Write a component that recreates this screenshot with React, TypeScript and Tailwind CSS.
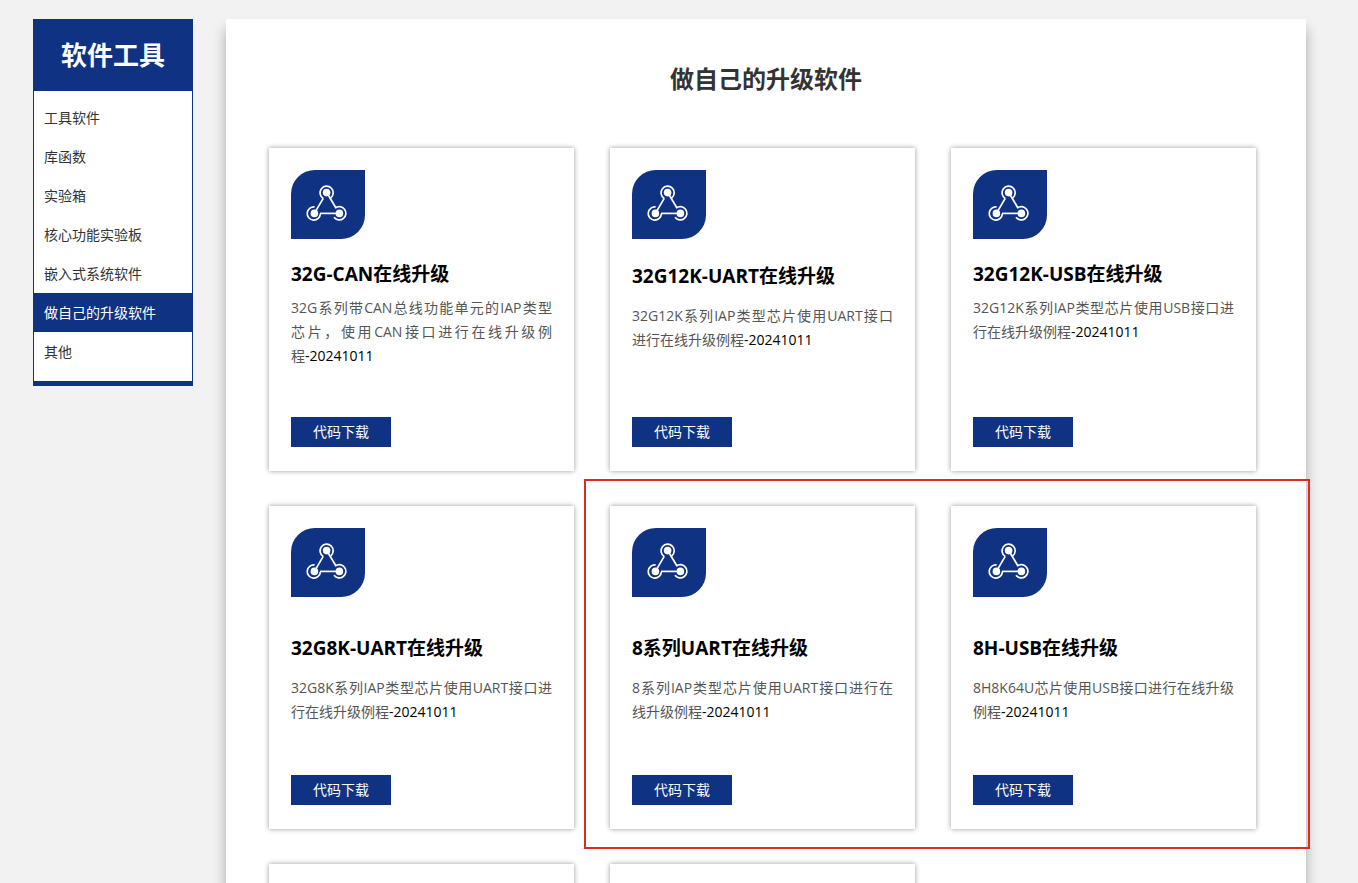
import clsx from "clsx";

const categories = [
  "工具软件",
  "库函数",
  "实验箱",
  "核心功能实验板",
  "嵌入式系统软件",
  "做自己的升级软件",
  "其他",
];

type Spacing = "compact" | "normal" | "roomy";

type Download = {
  title: string;
  lines: string[];
  date: string;
  spacing: Spacing;
};

const downloads: Download[] = [
  {
    title: "32G-CAN在线升级",
    lines: ["32G系列带CAN总线功能单元的IAP类型", "芯片，使用CAN接口进行在线升级例", "程"],
    date: "-20241011",
    spacing: "compact",
  },
  {
    title: "32G12K-UART在线升级",
    lines: ["32G12K系列IAP类型芯片使用UART接口", "进行在线升级例程"],
    date: "-20241011",
    spacing: "normal",
  },
  {
    title: "32G12K-USB在线升级",
    lines: ["32G12K系列IAP类型芯片使用USB接口进", "行在线升级例程"],
    date: "-20241011",
    spacing: "compact",
  },
  {
    title: "32G8K-UART在线升级",
    lines: ["32G8K系列IAP类型芯片使用UART接口进", "行在线升级例程"],
    date: "-20241011",
    spacing: "roomy",
  },
  {
    title: "8系列UART在线升级",
    lines: ["8系列IAP类型芯片使用UART接口进行在", "线升级例程"],
    date: "-20241011",
    spacing: "roomy",
  },
  {
    title: "8H-USB在线升级",
    lines: ["8H8K64U芯片使用USB接口进行在线升级", "例程"],
    date: "-20241011",
    spacing: "roomy",
  },
];

const headingSpacing: Record<Spacing, string> = {
  compact: "mt-[21px] mb-2",
  normal: "mt-[23px] mb-[14px]",
  roomy: "mt-[37px] mb-[14px]",
};

const NodesIcon = () => (
  <svg width="74" height="69" viewBox="0 0 74 69" fill="none" aria-hidden="true">
    <path d="M24 0H74V45A24 24 0 0 1 50 69H0V24A24 24 0 0 1 24 0Z" fill="#103282" />
    <g fill="#fff">
      <circle cx="35.6" cy="22.6" r="3.8" />
      <circle cx="23.4" cy="43.4" r="3.8" />
      <circle cx="48.4" cy="43.4" r="3.8" />
    </g>
    <g stroke="#fff" strokeWidth="1.7">
      <path d="M36 23L45 38" />
      <path d="M32.2 28.4L23.4 43.4" />
      <path d="M29 43.4H48" />
      <path d="M39.6 28A6.6 6.6 0 1 0 32.2 28.4" />
      <path d="M23.6 36.9A6.6 6.6 0 1 0 29.4 43.8" />
      <path d="M44.2 38.1A6.6 6.6 0 1 1 43 47.2" />
    </g>
  </svg>
);

const Sidebar = () => (
  <aside className="w-40 shrink-0 border border-t-0 border-b-[5px] border-[#103282] bg-white">
    <h2 className="bg-[#103282] text-center text-[26px] leading-[72px] font-bold text-white">
      软件工具
    </h2>
    <nav className="pt-[7px] pb-[10px]">
      <ul>
        {categories.map((name) => (
          <li key={name}>
            <a
              href="#"
              className={clsx(
                "block px-[10px] text-sm leading-[39px]",
                name === "做自己的升级软件" ? "bg-[#103282] text-white" : "text-[#333]"
              )}
            >
              {name}
            </a>
          </li>
        ))}
      </ul>
    </nav>
  </aside>
);

const DownloadCard = ({ item }: { item: Download }) => (
  <article className="flex min-h-[323px] flex-col bg-white px-[22px] pt-[22px] pb-6 shadow-[0_0_5px_rgba(0,0,0,0.4)]">
    <NodesIcon />
    <h3
      className={clsx(
        "text-[19px] leading-7 font-bold text-black",
        headingSpacing[item.spacing]
      )}
    >
      {item.title}
    </h3>
    <p className="text-sm leading-6 text-[#555]">
      {item.lines.map((line, index) => {
        const last = index === item.lines.length - 1;
        return (
          <span
            key={line}
            className={clsx("block", !last && "text-justify [text-align-last:justify]")}
          >
            {line}
            {last && <span className="text-black">{item.date}</span>}
          </span>
        );
      })}
    </p>
    <button
      type="button"
      className="mt-auto h-[30px] w-[100px] cursor-pointer bg-[#103282] text-sm text-white"
    >
      代码下载
    </button>
  </article>
);

const App = () => {
  return (
    <div className="flex h-screen items-start gap-[33px] overflow-hidden bg-[#f2f2f2] pt-[19px] pr-[52px] pl-[33px] font-['Open_Sans','Noto_Sans_CJK_SC',sans-serif]">
      <Sidebar />
      <main className="min-w-0 flex-1 bg-white py-10 shadow-[0_10px_12px_rgba(0,0,0,0.3)]">
        <h1 className="text-center text-2xl leading-10 font-bold text-[#333]">
          做自己的升级软件
        </h1>
        <div className="relative mt-[49px] mr-[50px] ml-[43px] grid grid-cols-3 gap-x-9 gap-y-[35px]">
          {downloads.map((item) => (
            <DownloadCard key={item.title} item={item} />
          ))}
          <div className="min-h-[323px] bg-white shadow-[0_0_5px_rgba(0,0,0,0.4)]" />
          <div className="min-h-[323px] bg-white shadow-[0_0_5px_rgba(0,0,0,0.4)]" />
          {/* highlight around the 8-series downloads */}
          <div className="pointer-events-none absolute -top-[27px] -right-[54px] -bottom-5 -left-[26px] col-start-2 col-end-4 row-start-2 row-end-3 border-2 border-[#dc2b22]" />
        </div>
      </main>
    </div>
  );
};

export default App;
